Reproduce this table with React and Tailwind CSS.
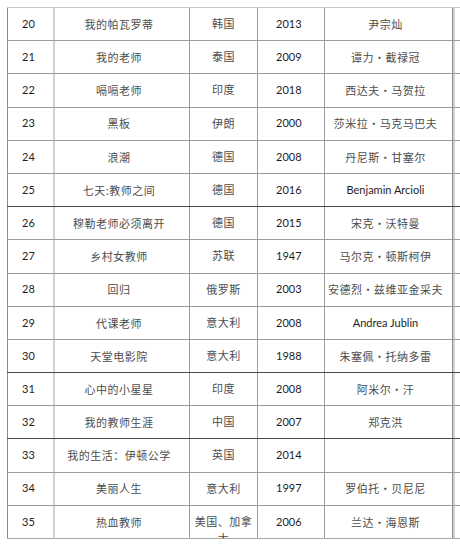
const rows = [
  { n: "20", title: "我的帕瓦罗蒂", country: "韩国", year: "2013", dir: "尹宗灿" },
  { n: "21", title: "我的老师", country: "泰国", year: "2009", dir: "谭力・截禄冠" },
  { n: "22", title: "嗝嗝老师", country: "印度", year: "2018", dir: "西达夫・马贺拉" },
  { n: "23", title: "黑板", country: "伊朗", year: "2000", dir: "莎米拉・马克马巴夫" },
  { n: "24", title: "浪潮", country: "德国", year: "2008", dir: "丹尼斯・甘塞尔" },
  { n: "25", title: "七天:教师之间", country: "德国", year: "2016", dir: "Benjamin Arcioli", latin: true, line: "dark" },
  { n: "26", title: "穆勒老师必须离开", country: "德国", year: "2015", dir: "宋克・沃特曼" },
  { n: "27", title: "乡村女教师", country: "苏联", year: "1947", dir: "马尔克・顿斯柯伊" },
  { n: "28", title: "回归", country: "俄罗斯", year: "2003", dir: "安德烈・兹维亚金采夫" },
  { n: "29", title: "代课老师", country: "意大利", year: "2008", dir: "Andrea Jublin", latin: true },
  { n: "30", title: "天堂电影院", country: "意大利", year: "1988", dir: "朱塞佩・托纳多雷", line: "dark" },
  { n: "31", title: "心中的小星星", country: "印度", year: "2008", dir: "阿米尔・汗" },
  { n: "32", title: "我的教师生涯", country: "中国", year: "2007", dir: "郑克洪", line: "dark" },
  { n: "33", title: "我的生活：伊顿公学", country: "英国", year: "2014", dir: "" },
  { n: "34", title: "美丽人生", country: "意大利", year: "1997", dir: "罗伯托・贝尼尼" },
  { n: "35", title: "热血教师", country: "美国、加拿大", year: "2006", dir: "兰达・海恩斯", line: "last" },
]

const cjk = "font-['Noto_Sans_CJK_SC',sans-serif] text-[#4d4d4d] tracking-[0.5px]"
const latin = "font-['Lato','Noto_Sans',sans-serif] text-[#1e1e1e]"

function Row({ r }) {
  const lineColor =
    r.line === "dark" ? "border-b-[#4a4a4a]" : r.line === "last" ? "border-b-[#a8a8a8]" : "border-b-[#9c9c9c]"
  return (
    <div className={`flex h-[33.2px] border-b text-[11px] ${lineColor}`}>
      <div className={`w-[48px] shrink-0 border-l border-l-[#8a8a8a] border-r-2 border-r-[#d2d2d2] flex items-center pl-[14px] ${latin}`}>
        {r.n}
      </div>
      <div className={`w-[135px] shrink-0 border-r border-r-[#9c9c9c] flex items-center justify-center pr-[6px] ${cjk}`}>
        {r.title}
      </div>
      {/* country wraps and runs past the row on the last line, like the source */}
      <div className={`w-[68px] shrink-0 border-r border-r-[#9c9c9c] overflow-hidden px-[4px] pt-[7px] text-center leading-[17px] ${cjk}`}>
        {r.country}
      </div>
      <div className={`w-[67px] shrink-0 border-r border-r-[#9c9c9c] flex items-center pl-[18px] ${latin}`}>
        {r.year}
      </div>
      <div
        className={`w-[128px] shrink-0 border-r border-r-[#909090] flex items-center justify-center pr-[6px] ${
          r.latin ? latin : cjk
        }`}
      >
        {r.dir}
      </div>
      <div className="flex-1 border-l-2 border-l-[#d2d2d2]" />
    </div>
  )
}

export default function App() {
  return (
    <div className="w-[460px] h-[549px] bg-white overflow-hidden pt-[7px] pl-[7px]">
      <div className="border-t border-t-[#c8c8c8]">
        {rows.map((r) => (
          <Row key={r.n} r={r} />
        ))}
      </div>
    </div>
  )
}
